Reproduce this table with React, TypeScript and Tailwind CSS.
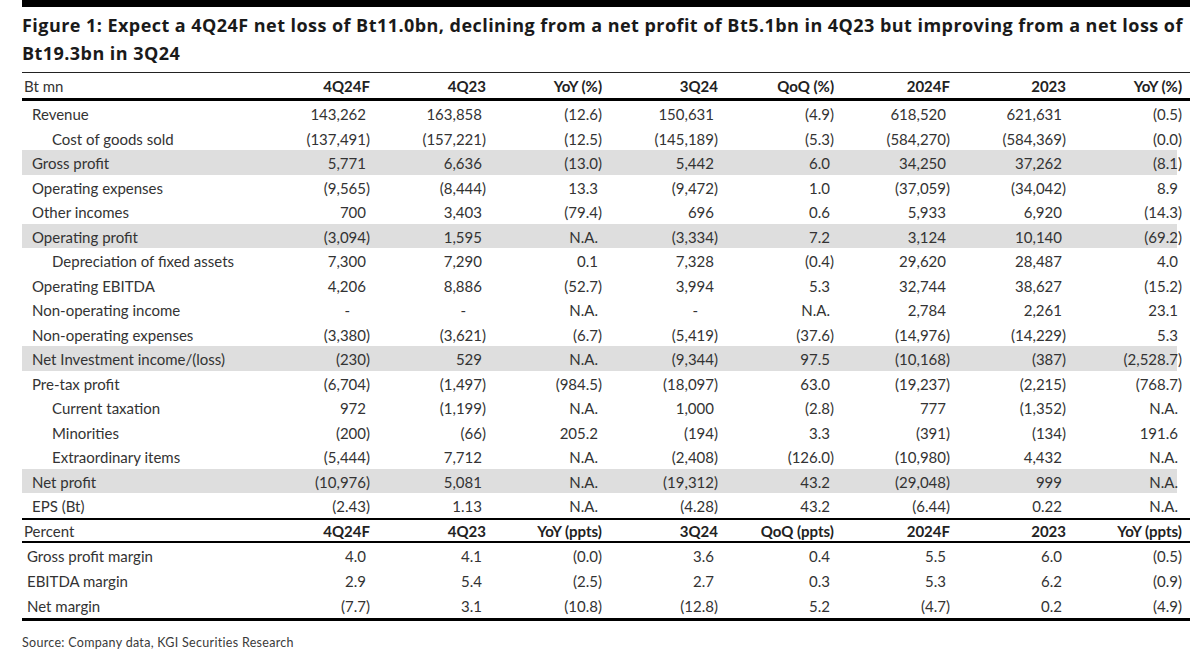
import React from "react";

type Row = {
  label: string;
  indent?: "main" | "sub" | "pct";
  shade?: boolean;
  values: string[];
};

const rows: Row[] = [
  { label: "Revenue", values: ["143,262", "163,858", "(12.6)", "150,631", "(4.9)", "618,520", "621,631", "(0.5)"] },
  { label: "Cost of goods sold", indent: "sub", values: ["(137,491)", "(157,221)", "(12.5)", "(145,189)", "(5.3)", "(584,270)", "(584,369)", "(0.0)"] },
  { label: "Gross profit", shade: true, values: ["5,771", "6,636", "(13.0)", "5,442", "6.0", "34,250", "37,262", "(8.1)"] },
  { label: "Operating expenses", values: ["(9,565)", "(8,444)", "13.3", "(9,472)", "1.0", "(37,059)", "(34,042)", "8.9"] },
  { label: "Other incomes", values: ["700", "3,403", "(79.4)", "696", "0.6", "5,933", "6,920", "(14.3)"] },
  { label: "Operating profit", shade: true, values: ["(3,094)", "1,595", "N.A.", "(3,334)", "7.2", "3,124", "10,140", "(69.2)"] },
  { label: "Depreciation of fixed assets", indent: "sub", values: ["7,300", "7,290", "0.1", "7,328", "(0.4)", "29,620", "28,487", "4.0"] },
  { label: "Operating EBITDA", values: ["4,206", "8,886", "(52.7)", "3,994", "5.3", "32,744", "38,627", "(15.2)"] },
  { label: "Non-operating income", values: ["-", "-", "N.A.", "-", "N.A.", "2,784", "2,261", "23.1"] },
  { label: "Non-operating expenses", values: ["(3,380)", "(3,621)", "(6.7)", "(5,419)", "(37.6)", "(14,976)", "(14,229)", "5.3"] },
  { label: "Net Investment income/(loss)", shade: true, values: ["(230)", "529", "N.A.", "(9,344)", "97.5", "(10,168)", "(387)", "(2,528.7)"] },
  { label: "Pre-tax profit", values: ["(6,704)", "(1,497)", "(984.5)", "(18,097)", "63.0", "(19,237)", "(2,215)", "(768.7)"] },
  { label: "Current taxation", indent: "sub", values: ["972", "(1,199)", "N.A.", "1,000", "(2.8)", "777", "(1,352)", "N.A."] },
  { label: "Minorities", indent: "sub", values: ["(200)", "(66)", "205.2", "(194)", "3.3", "(391)", "(134)", "191.6"] },
  { label: "Extraordinary items", indent: "sub", values: ["(5,444)", "7,712", "N.A.", "(2,408)", "(126.0)", "(10,980)", "4,432", "N.A."] },
  { label: "Net profit", shade: true, values: ["(10,976)", "5,081", "N.A.", "(19,312)", "43.2", "(29,048)", "999", "N.A."] },
  { label: "EPS (Bt)", values: ["(2.43)", "1.13", "N.A.", "(4.28)", "43.2", "(6.44)", "0.22", "N.A."] },
];

const margins: Row[] = [
  { label: "Gross profit margin", indent: "pct", values: ["4.0", "4.1", "(0.0)", "3.6", "0.4", "5.5", "6.0", "(0.5)"] },
  { label: "EBITDA margin", indent: "pct", values: ["2.9", "5.4", "(2.5)", "2.7", "0.3", "5.3", "6.2", "(0.9)"] },
  { label: "Net margin", indent: "pct", values: ["(7.7)", "3.1", "(10.8)", "(12.8)", "5.2", "(4.7)", "0.2", "(4.9)"] },
];

const grid = "grid grid-cols-[232px_repeat(8,116px)] items-center";

// accounting style: positives leave room for the closing paren
const Num = ({ v }: { v: string }) => {
  if (v === "-") return <span className="pr-[20px]">-</span>;
  if (v.endsWith(")")) return <span>{v}</span>;
  return (
    <span>
      {v}
      <span className="invisible">)</span>
    </span>
  );
};

const indentCls = { main: "pl-[10px]", sub: "pl-[30px]", pct: "pl-[5px]" };

const DataRow = ({ row, h }: { row: Row; h: string }) => (
  <div className={`${grid} ${h} pt-[2px] ${row.shade ? "bg-[#dedede] mr-[5px]" : ""}`}>
    <div className={`${indentCls[row.indent ?? "main"]} whitespace-nowrap`}>{row.label}</div>
    {row.values.map((v, i) => (
      <div key={i} className="text-right whitespace-nowrap">
        <Num v={v} />
      </div>
    ))}
  </div>
);

const HeaderRow = ({ first, cols, h }: { first: string; cols: string[]; h: string }) => (
  <div className={`${grid} ${h}`}>
    <div className="pl-[2px]">{first}</div>
    {cols.map((c) => (
      <div key={c} className="text-right font-bold text-[#222]">
        {c}
      </div>
    ))}
  </div>
);

export default function App() {
  return (
    <div className="w-[1200px] h-[658px] bg-white overflow-hidden pl-[22px] pr-[10px]" style={{ fontFamily: "Lato, 'Open Sans', sans-serif" }}>
      <div className="h-[7px] bg-black" />
      <h1
        className="mt-[5px] text-[18px] leading-[27.5px] font-bold tracking-[0.45px] text-[#1a1a1a] whitespace-nowrap"
        style={{ fontFamily: "'Open Sans', sans-serif" }}
      >
        Figure 1: Expect a 4Q24F net loss of Bt11.0bn, declining from a net profit of Bt5.1bn in 4Q23 but improving from a net loss of
        <br />
        Bt19.3bn in 3Q24
      </h1>

      <div className="mt-[5px] w-[1168px] text-[15px] text-[#333]">
        <div className="border-t border-[#222] border-b-[3px] border-b-black">
          <HeaderRow first="Bt mn" cols={["4Q24F", "4Q23", "YoY (%)", "3Q24", "QoQ (%)", "2024F", "2023", "YoY (%)"]} h="h-[25px] pr-[8px] pt-[2px]" />
        </div>
        <div className="pr-[8px]">
          {rows.map((r) => (
            <DataRow key={r.label} row={r} h="h-[24.5px]" />
          ))}
        </div>
        <div className="border-t-[2px] border-black border-b-[2px] pr-[8px]">
          <HeaderRow first="Percent" cols={["4Q24F", "4Q23", "YoY (ppts)", "3Q24", "QoQ (ppts)", "2024F", "2023", "YoY (ppts)"]} h="h-[21px]" />
        </div>
        <div className="pr-[8px] border-b-[3px] border-black">
          {margins.map((r) => (
            <DataRow key={r.label} row={r} h="h-[25px]" />
          ))}
        </div>
      </div>

      <p className="mt-[13px] text-[12.5px] tracking-[0.3px] text-[#3a3a3a]">Source: Company data, KGI Securities Research</p>
    </div>
  );
}
